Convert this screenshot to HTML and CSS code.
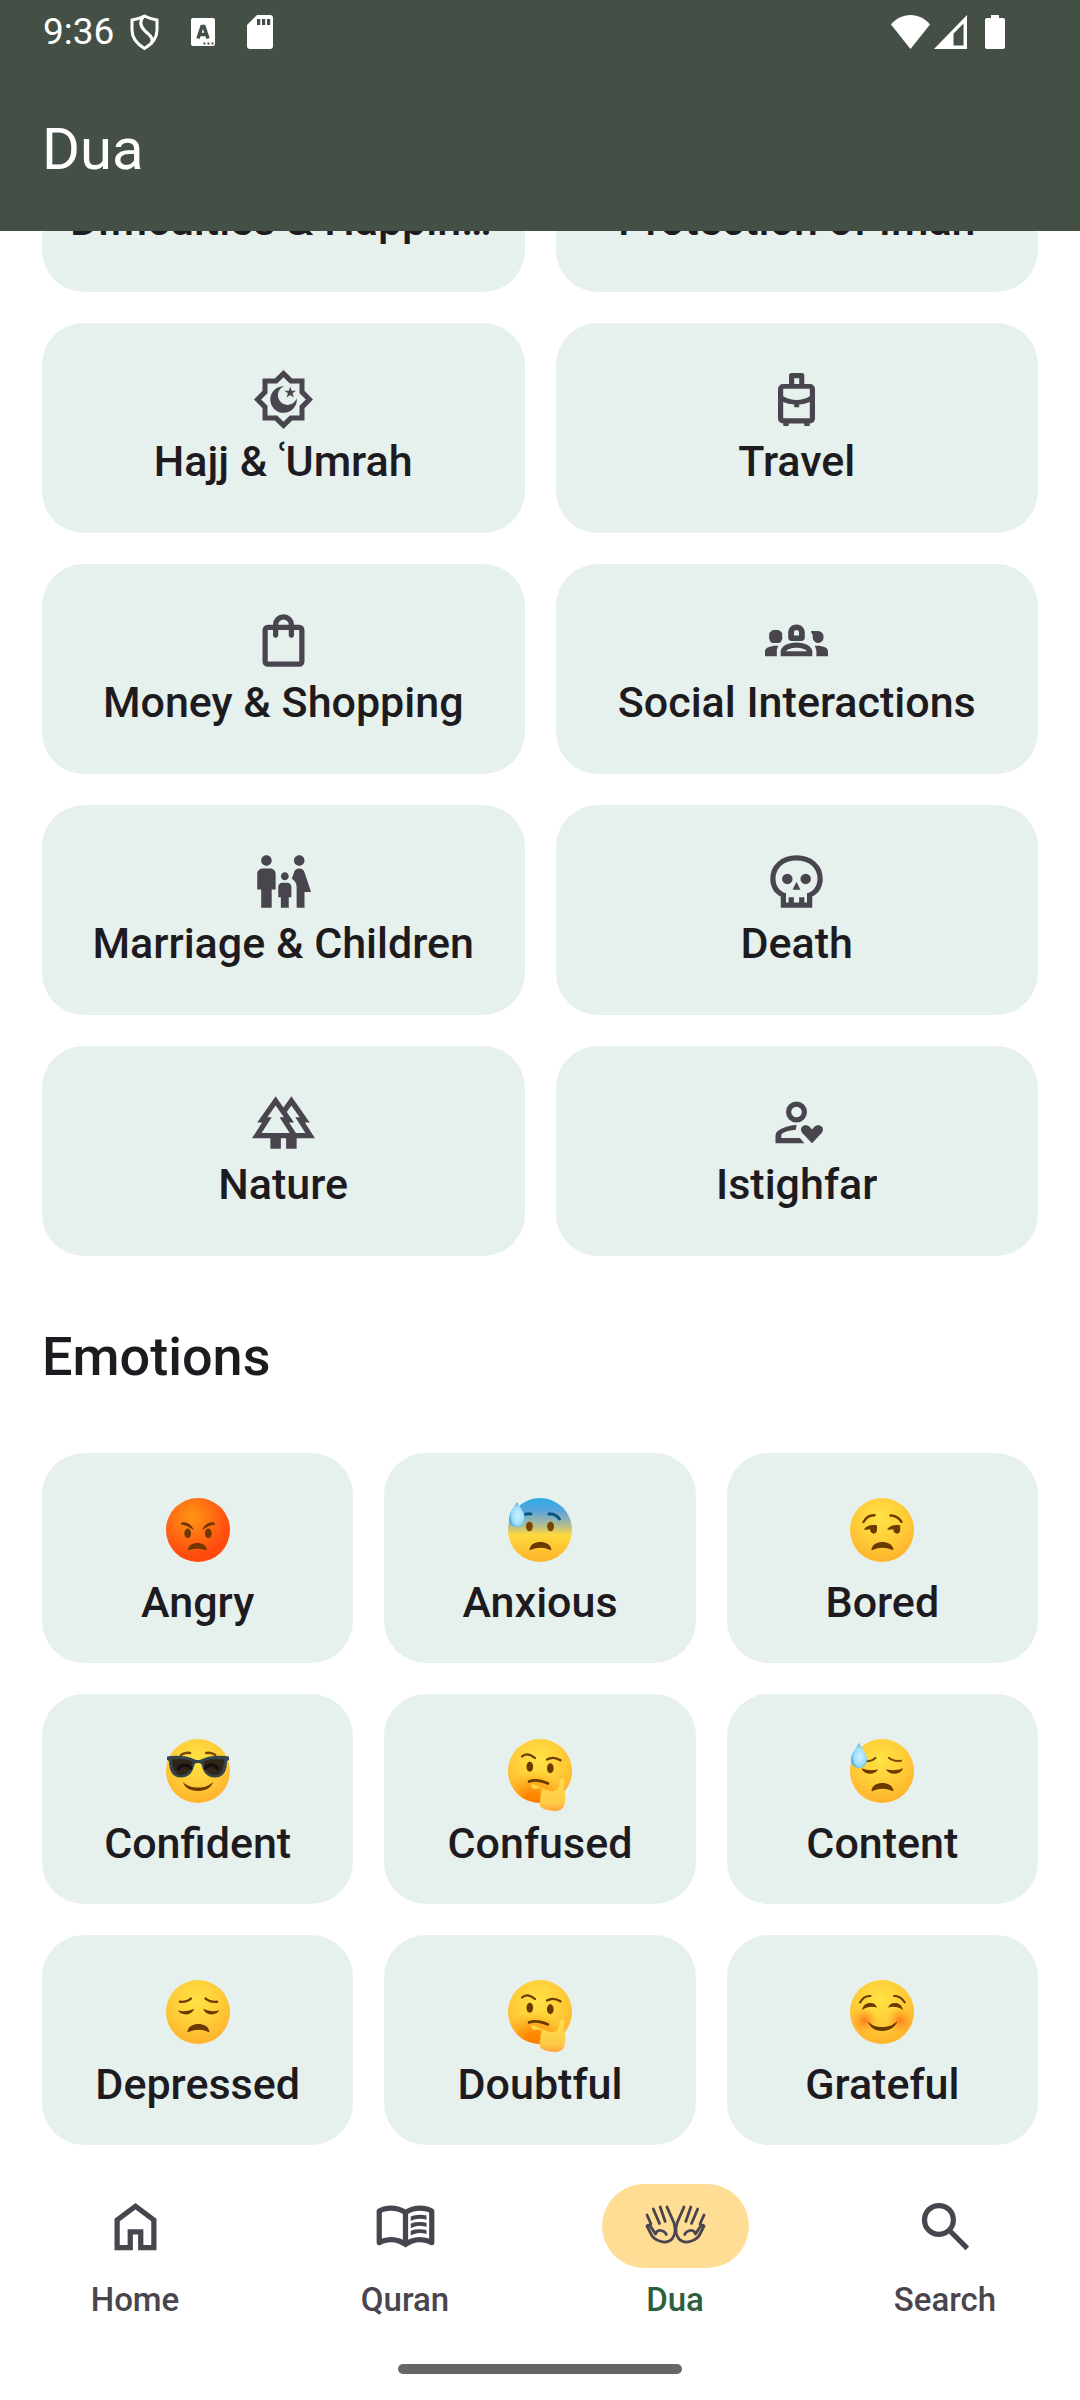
FILE: index.html
```html
<!DOCTYPE html>
<html lang="en">
<head>
<meta charset="utf-8">
<meta name="viewport" content="width=device-width, initial-scale=1">
<title>Dua</title>
<link rel="stylesheet" href="styles.css">
</head>
<body>
<svg class="defs" aria-hidden="true">
  <defs>
    <radialGradient id="yellow" cx=".47" cy=".32" r=".68"><stop offset="0" stop-color="#ffe344"/><stop offset=".55" stop-color="#ffcd38"/><stop offset="1" stop-color="#ffb22c"/></radialGradient>
    <radialGradient id="red" cx=".4" cy=".3" r=".6"><stop offset="0" stop-color="#ff9616"/><stop offset="1" stop-color="#ff4c0e"/></radialGradient>
    <linearGradient id="cold" x1="0" y1="0" x2="0" y2="1"><stop offset="0" stop-color="#2bace6"/><stop offset=".2" stop-color="#5ba3dc"/><stop offset=".42" stop-color="#aebc96"/><stop offset=".58" stop-color="#ffd83c"/><stop offset="1" stop-color="#ffb22c"/></linearGradient>
    <radialGradient id="drop" cx=".55" cy=".55" r=".6"><stop offset="0" stop-color="#c9f1ff"/><stop offset=".6" stop-color="#9fdffb"/><stop offset="1" stop-color="#2096dc"/></radialGradient>
    <radialGradient id="blush"><stop offset="0" stop-color="#ff7d1c"/><stop offset="1" stop-color="#ff9a20" stop-opacity="0"/></radialGradient>
    <radialGradient id="chin" cx=".4" cy="1" r=".5"><stop offset="0" stop-color="#ff7b00"/><stop offset=".3" stop-color="#ff8600"/><stop offset="1" stop-color="#ff9d10" stop-opacity="0"/></radialGradient>
    <linearGradient id="hand" x1="0" y1="0" x2="0" y2="1"><stop offset="0" stop-color="#ffdc4c"/><stop offset=".75" stop-color="#ffcb48"/><stop offset="1" stop-color="#ffa43a"/></linearGradient>
  </defs>
  <symbol id="tear" viewBox="0 0 64 74"><path fill="url(#drop)" d="M9 4c3 5 8 11 8 17a8 8 0 0 1-16 0C1 15 6 9 9 4z"/></symbol>
  <symbol id="frown" viewBox="0 0 64 74"><path fill="#6a3a00" d="M21.500 51C23 46 27 44 32.300 44S42 46 43.300 51c.3 1.300-.6 1.500-1.500.8C36 49 29 49 23 51.800c-.9.600-1.800.4-1.500-.8z"/></symbol>
  <symbol id="thinking" viewBox="0 0 64 74">
    <circle cx="32" cy="32" r="32" fill="url(#yellow)"/><circle cx="32" cy="32" r="32" fill="url(#chin)"/>
    <g fill="none" stroke="#6a3a00" stroke-width="2.200" stroke-linecap="round"><path d="M14 17.500c4-4 8-2.500 13 1.500M39 20.500c4-2.500 9-2 13.500.8"/><path stroke-width="2.600" d="M21 42.500c5-2 11-1.500 19 2"/></g>
    <g fill="#6a3a00"><ellipse cx="21.800" cy="27.700" rx="3.300" ry="5"/><ellipse cx="42.300" cy="29.300" rx="3.300" ry="5"/></g>
    <path fill="url(#hand)" d="M23 46.500c.5-1.800 2.500-1.500 4.500-.5C33 49 38 51 43 52c4.500 1 7-1.500 8-5.500l1-5c.5-2.500 4.500-2.500 4.500.5 0 3-.9 6-.8 9 2 3 1.800 8 1.300 12-.7 5.500-3.500 9-9 9-5 0-11-1-15.500-4-1-2-.3-4 0-5-1-1.500-.8-3 .3-4-1-2-.5-4 .5-5v-3c1-1.500 3-2 5-2.500L25 50z"/>
  </symbol>
</svg>

<header class="top">
  <div class="status">
    <span class="time">9:36</span>
    <svg class="shield" viewBox="0 0 29 36" fill="none" stroke="#fff" stroke-width="3"><path d="M14.500 2c4 2.200 8 3.300 12.500 4v10c0 8-5 14-12.500 18.500C7 30 2 24 2 16V6c4.500-.7 8.500-1.800 12.500-4z"/><path d="M14 2c-5 5-4 10 1 15 6 5 9 8 6 13"/></svg>
    <svg class="letter" viewBox="0 0 24 28"><rect width="24" height="28" rx="2" fill="#fff"/><path fill="none" stroke="#445046" stroke-width="3.500" d="M7 20.500l4-12h2l4 12M9 16.500h6"/><path fill="#445046" d="M12.500 24.500h2v2h-2zm4 0h2v2h-2zm4 0h2v2h-2z"/></svg>
    <svg class="sd" viewBox="0 0 26 34"><path fill="#fff" d="M10 0h13a3 3 0 0 1 3 3v28a3 3 0 0 1-3 3H3a3 3 0 0 1-3-3V10z"/><path fill="#445046" d="M10 4h3.200v6H10zm5 0h3.200v6H15zm5 0h3.200v6H20z"/></svg>
    <span class="signals">
      <svg class="wifi" viewBox="0 0 39 34"><path fill="#fff" d="M19.500 34L0 9.500C5 3.500 12 0 19.500 0S34 3.500 39 9.500z"/></svg>
      <svg class="cell" viewBox="0 0 33 34"><path fill="#fff" fill-rule="evenodd" d="M0 34L33 0v34zM19.500 18.500V30.500h10V8.500z"/></svg>
      <svg class="battery" viewBox="0 0 20 34"><path fill="#fff" d="M6 0h8v3h4a2 2 0 0 1 2 2v27a2 2 0 0 1-2 2H2a2 2 0 0 1-2-2V5a2 2 0 0 1 2-2h4z"/></svg>
    </span>
  </div>
  <h1 class="title">Dua</h1>
</header>

<main class="content">
  <div class="grid two scrolled">
    <button class="card"><span class="icon"></span><span class="label">Difficulties &amp; Happiness</span></button>
    <button class="card"><span class="icon"></span><span class="label">Protection of Iman</span></button>
    <button class="card">
      <svg class="icon" viewBox="0 0 63 63"><g transform="translate(31.500 31.500)"><path fill-rule="evenodd" d="M0-29.500L8.700-21H21v12.300L29.500 0 21 8.700V21H8.700L0 29.500-8.700 21H-21V8.700L-29.500 0-21-8.700V-21h12.300zM0-22.300L-6.300-16H-16v9.700L-22.300 0-16 6.300V16h9.700L0 22.300 6.300 16H16V6.300L22.300 0 16-6.300V-16H6.300z"/><path d="M.5-13.300A13.300 13.300 0 1 0 13.300-1.200 9.700 9.700 0 1 1 .5-13.300z"/><path d="M6.700-12.900l1.400 4.100h4.300L9-6.200l1.300 4.200-3.600-2.500L3.100-2l1.300-4.200L1-8.800h4.300z"/></g></svg>
      <span class="label">Hajj &amp; ʿUmrah</span></button>
    <button class="card">
      <svg class="icon" viewBox="0 0 63 63"><path fill-rule="evenodd" d="M24 16V7.500A2.500 2.500 0 0 1 26.500 5h10.300a2.500 2.500 0 0 1 2.500 2.500V16H45a5 5 0 0 1 5 5v29.500a5 5 0 0 1-5 5h-.3V58h-5.400v-2.500H23.700V58h-5.400v-2.500H18a5 5 0 0 1-5-5V21a5 5 0 0 1 5-5zM29.200 10.300V16h5v-5.700zM18.200 20.700v7.500q13.300 7.500 26.600 0v-7.500zM18.200 34v16.200h26.600V34q-5 2-10.600 2.600v2.700h-5v-2.700Q23 36 18.200 34z"/></svg>
      <span class="label">Travel</span></button>
    <button class="card">
      <svg class="icon" viewBox="0 -960 960 960"><path d="M240-80q-33 0-56.500-23.500T160-160v-480q0-33 23.500-56.500T240-720h80q0-66 47-113t113-47q66 0 113 47t47 113h80q33 0 56.500 23.500T800-640v480q0 33-23.500 56.500T720-80H240Zm0-80h480v-480h-80v80q0 17-11.500 28.500T600-520q-17 0-28.500-11.500T560-560v-80H400v80q0 17-11.500 28.500T360-520q-17 0-28.500-11.500T320-560v-80h-80v480Zm160-560h160q0-33-23.500-56.500T480-800q-33 0-56.500 23.500T400-720Z"/></svg>
      <span class="label">Money &amp; Shopping</span></button>
    <button class="card">
      <svg class="icon" viewBox="0 0 63 63"><path d="M6 22.500c1-1.500 3-1.700 4.500-1.500 2-.3 4.500 0 5.500 1.700 1.300 1 1.500 3 1 4.300.7 1.600.4 3.300-.5 4.500-.5 2-2.500 2.700-4 2.500H8c-2 0-3-1.500-3.300-3.200-1-1.200-.7-2.800-.4-4C3.700 25 4.500 23.500 6 22.500zM0 47.300v-5c0-3.600 6-6 13.300-5.500-1.200 2.500-1.500 4-1.500 6v4.500zM63 47.300v-5c0-3.600-5-6-13.300-5.500 1.200 2.500 1.700 4 1.700 6v4.500zM46 22h7a5.500 6 0 1 1-5.300 7V26c0-1.200-1.700-1.500-1.700-4z"/><path fill-rule="evenodd" d="M23.200 28.500V24c0-5 3.300-8.500 8.300-8.500s8.300 3.500 8.300 8.500v4.500c0 2.300-1.300 3.500-3.500 3.500h-9.600c-2.200 0-3.500-1.200-3.500-3.500zM29 26.500h5V23c0-2.800-5-2.800-5 0zM15.700 47.300v-4.500c0-5.500 7-9.300 15.800-9.300s15.800 3.800 15.800 9.300v4.500zM21 42.200h21c-1.500-2-6-3.500-10.500-3.500S22.500 40.200 21 42.200z"/></svg>
      <span class="label">Social Interactions</span></button>
    <button class="card">
      <svg class="icon" viewBox="0 0 24 24"><path d="M16 4c0-1.110.89-2 2-2s2 .89 2 2-.89 2-2 2-2-.89-2-2zm4 18v-6h2.500l-2.540-7.630A2.010 2.010 0 0 0 18.060 7h-.12a2 2 0 0 0-1.900 1.370l-.86 2.580c1.080.6 1.820 1.730 1.820 3.050v8h3zm-7.500-10.500c.83 0 1.500-.67 1.500-1.500s-.67-1.500-1.500-1.500S11 9.170 11 10s.67 1.500 1.500 1.500zM5.500 6c1.110 0 2-.89 2-2s-.89-2-2-2-2 .89-2 2 .89 2 2 2zm2 16v-7H9V9c0-1.100-.9-2-2-2H4c-1.100 0-2 .9-2 2v6h1.500v7h4zm6.500 0v-4h1v-4c0-.82-.68-1.500-1.500-1.500h-2c-.82 0-1.500.68-1.500 1.500v4h1v4h3z"/></svg>
      <span class="label">Marriage &amp; Children</span></button>
    <button class="card">
      <svg class="icon" viewBox="0 -960 960 960"><path fill-rule="evenodd" d="M240-80v-170q-39-17-68.500-45.500t-50-64.500q-20.500-36-31-77T80-520q0-158 112-259t288-101q176 0 288 101t112 259q0 42-10.500 83t-31 77q-20.500 36-50 64.500T720-250v170H240Zm80-80h40v-80h80v80h80v-80h80v80h40v-142q38-9 67.500-30t50-50q20.500-29 31.500-64t11-74q0-125-88.500-202.500T480-800q-143 0-231.500 77.500T160-520q0 39 11 74t31.500 64q20.500 29 50.500 50t67 30v142Z"/><path d="M420-355h120l-60-122Z"/><circle cx="313" cy="-520" r="0"/><circle cx="313" cy="-520" r="0"/><circle cx="340" cy="-520" r="80"/><circle cx="620" cy="-520" r="80"/></svg>
      <span class="label">Death</span></button>
    <button class="card">
      <svg class="icon" viewBox="0 -960 960 960"><path d="M280-80v-160H0l154-240H80l280-400 120 172 120-172 280 400h-74l154 240H680v160H520v-160h-80v160H280Zm389-240h145L659-560h67L600-740l-71 101 111 159h-74l103 160Zm-523 0h428L419-560h67L360-740 234-560h67L146-320Z"/></svg>
      <span class="label">Nature</span></button>
    <button class="card">
      <svg class="icon" viewBox="0 0 63 63"><path fill-rule="evenodd" d="M31.500 10.500a10.500 10.500 0 1 1 0 21 10.500 10.500 0 0 1 0-21zm0 5.200a5.300 5.300 0 1 0 0 10.600 5.300 5.300 0 0 0 0-10.600z"/><path d="M10.500 52.300V45c0-4 3-6 7-7.800 4-1.600 9-3 14.200-3.100l-1.100 5c-4.500.1-8.500 1-12 2.700-1.600.8-2.300 1.500-2.300 2.800V47H35l4.300 5.300zM47 52.200L37.300 42c-1.800-2.200-1.600-4.800 0-6.400 2-2 5.500-1.900 7.300.2l2.400 2.700 2.400-2.700c1.800-2.100 5.300-2.200 7.300-.2 1.600 1.600 1.800 4.200 0 6.400z"/></svg>
      <span class="label">Istighfar</span></button>
  </div>

  <h2 class="section">Emotions</h2>

  <div class="grid three">
    <button class="card">
      <svg class="emoji" viewBox="0 0 64 74"><circle cx="32" cy="32" r="32" fill="url(#red)"/><g fill="#703800"><path d="M15 26.500c-.6-1 .5-2.200 2-2.300 5-.5 9 3.500 11 8-4-2.700-8-5.200-13-5.700zM49 26.500c.6-1-.5-2.200-2-2.300-5-.5-9 3.500-11 8 4-2.700 8-5.200 13-5.700z"/><ellipse cx="21.700" cy="35.300" rx="3.400" ry="4.800"/><ellipse cx="42.300" cy="35.300" rx="3.400" ry="4.800"/><path d="M22 51c1-4 5-6 9.500-6s8 2 9.300 6c.2 1.200-.7 1.600-1.600 1-5-1.800-10.500-1.800-15.600 0-.9.600-1.800.2-1.600-1z"/></g></svg>
      <span class="label">Angry</span></button>
    <button class="card">
      <svg class="emoji" viewBox="0 0 64 74"><circle cx="32" cy="32" r="32" fill="url(#cold)"/><path fill="none" stroke="#07567f" stroke-width="3" stroke-linecap="round" d="M16 17c2-1.500 5-1.500 7-1M41 16c4-.5 8 1.500 10.500 5"/><g fill="#7a4500"><ellipse cx="21.400" cy="28.500" rx="3.400" ry="4.800"/><ellipse cx="42.600" cy="28.500" rx="3.400" ry="4.800"/></g><use href="#frown"/><use href="#tear"/></svg>
      <span class="label">Anxious</span></button>
    <button class="card">
      <svg class="emoji" viewBox="0 0 64 74"><circle cx="32" cy="32" r="32" fill="url(#yellow)"/><path fill="none" stroke="#6a3a00" stroke-width="2.400" stroke-linecap="round" d="M13.500 24c2.500-4.500 6-7 11-6.700M40.500 17.500c5 0 8.500 2.500 11 6.300"/><path fill="#6a3a00" d="M13.800 31.500c3-4 8-5.200 13.200-4v4c0 3-2 5-4.500 3.800-1.800-1-2.600-2.300-2.300-4.200-2 .8-4 .8-6.400.4zM37 31.500c3-4 8-5.200 13.200-4v4c0 3-2 5-4.500 3.800-1.800-1-2.600-2.300-2.300-4.200-2 .8-4 .8-6.400.4z"/><use href="#frown"/></svg>
      <span class="label">Bored</span></button>
    <button class="card">
      <svg class="emoji" viewBox="0 0 64 74"><circle cx="32" cy="32" r="32" fill="url(#yellow)"/><path fill="none" stroke="#7a4a00" stroke-width="2.600" stroke-linecap="round" d="M15 16c2.500-2 5.500-2.600 9-2M40.300 14c3.500-.6 6.500 0 9 2"/><path fill="#35454c" d="M1 17.500c9-1.400 20-.8 28 3 2 .8 4 .8 6 0 8-3.800 19-4.400 28-3v3.500l-2 1c0 9-3 16.500-12 16.500-8.500 0-12-6-13.500-13-.7-2-6.300-2-7 0C27 32.500 23.500 38.500 15 38.500 6 38.500 3 31 3 22l-2-1z"/><path fill="#302519" d="M6 20.500c6-1 14-1 20.500 2C26 30 22 36 15.500 36 8.500 36 6 29 6 20.500zM58 20.500c-6-1-14-1-20.500 2C38 30 42 36 48.500 36 55.500 36 58 29 58 20.500z"/><path fill="none" stroke="#15110e" stroke-width="3.500" stroke-linecap="round" d="M12.500 29.500c3-4.500 9-4.500 12-.5M39.500 29c3-4 9-4 12 .5"/><path fill="#6a3a00" d="M17 43c4 4 9 5.600 15 5.600S43 47 47 43c-1 5-7 9-15 9s-14-4-15-9z"/></svg>
      <span class="label">Confident</span></button>
    <button class="card">
      <svg class="emoji"><use href="#thinking"/></svg>
      <span class="label">Confused</span></button>
    <button class="card">
      <svg class="emoji" viewBox="0 0 64 74"><circle cx="32" cy="32" r="32" fill="url(#yellow)"/><path fill="none" stroke="#7a4a00" stroke-width="2" stroke-linecap="round" d="M17 22.300c4 0 6.500-1.500 8.500-3.500M38.800 18.800c3 2.500 7 3.600 12.200 3"/><path fill="#6a3a00" d="M11.700 29.300c5 2.200 11 2.600 16.300.9-1.500 3-4.500 4.600-8.500 4.500s-7-2.300-7.800-5.400zM53 29.300c-5 2.200-11 2.600-17 .9 1.500 3 4.800 4.600 8.800 4.500s7.400-2.300 8.200-5.400z"/><use href="#frown"/><use href="#tear"/></svg>
      <span class="label">Content</span></button>
    <button class="card">
      <svg class="emoji" viewBox="0 0 64 74"><circle cx="32" cy="32" r="32" fill="url(#yellow)"/><path fill="none" stroke="#6a3a00" stroke-width="2.400" stroke-linecap="round" d="M14 21.800c5 .3 8.500-.8 11-3.300M39.500 18.500c2.500 2.500 6 3.600 11.500 3.300"/><path fill="#6a3a00" d="M12 30.300c5 1.500 11 1 16-1.500-1 3.500-4 5.600-8 5.600s-7-1.600-8-4.100zM53.300 30.300c-5 1.500-11 1-16-1.500 1 3.500 4 5.600 8 5.600s7-1.600 8-4.100z"/><use href="#frown"/></svg>
      <span class="label">Depressed</span></button>
    <button class="card">
      <svg class="emoji"><use href="#thinking"/></svg>
      <span class="label">Doubtful</span></button>
    <button class="card">
      <svg class="emoji" viewBox="0 0 64 74"><circle cx="32" cy="32" r="32" fill="url(#yellow)"/><circle cx="14.300" cy="40.500" r="13" fill="url(#blush)"/><circle cx="50" cy="40.500" r="13" fill="url(#blush)"/><path fill="none" stroke="#6a3a00" stroke-width="2" stroke-linecap="round" d="M10 22.500c2.500-4.500 6-7 10.500-6.500M44 16c4.500-.5 8 2 10.800 6.500"/><path fill="#6a3a00" d="M12 30c1-4.500 4-7 8-7s6 2 7 4.500c-4-1.300-10-1.300-15 2.500zM53 30c-1-4.500-4-7-8-7s-6 2-7 4.500c4-1.300 10-1.300 15 2.500zM17.500 41c4 4.500 9 6 14.500 6s11-1.500 15.500-6c-2 6-8 10-15.500 10s-12.500-4-14.500-10z"/></svg>
      <span class="label">Grateful</span></button>
  </div>
</main>

<footer class="bottom">
  <nav class="nav">
    <a class="tab" href="#home"><span class="pill"><svg class="icon" viewBox="0 -960 960 960"><path d="M240-200h120v-240h240v240h120v-360L480-740 240-560v360Zm-80 80v-480l320-240 320 240v480H520v-240h-80v240H160Z"/></svg></span>Home</a>
    <a class="tab" href="#quran"><span class="pill"><svg class="icon" viewBox="0 -960 960 960"><path d="M560-564v-68q33-14 67.500-21t72.500-7q26 0 51 4t49 10v64q-24-9-48.500-13.500T700-600q-38 0-73 9.500T560-564Zm0 220v-68q33-14 67.500-21t72.500-7q26 0 51 4t49 10v64q-24-9-48.500-13.500T700-380q-38 0-73 9t-67 27Zm0-110v-68q33-14 67.500-21t72.500-7q26 0 51 4t49 10v64q-24-9-48.500-13.500T700-490q-38 0-73 9.500T560-454ZM260-320q47 0 91.500 10.500T440-278v-394q-41-24-87-36t-93-12q-36 0-71.500 7T120-692v396q35-12 69.500-18t70.500-6Zm260 42q44-21 88.500-31.500T700-320q36 0 70.500 6t69.500 18v-396q-33-14-68.500-21t-71.500-7q-47 0-93 12t-87 36v394Zm-40 118q-48-38-104-59t-116-21q-42 0-82.500 11T100-198q-21 11-40.500-1T40-234v-482q0-11 5.500-21T62-752q46-24 96-36t102-12q58 0 113.500 15T480-740q51-30 106.500-45T700-800q52 0 102 12t96 36q11 5 16.500 15t5.500 21v482q0 23-19.500 35t-40.500 1q-37-20-77.500-31T700-240q-60 0-116 21t-104 59Z"/></svg></span>Quran</a>
    <a class="tab active" href="#dua" aria-current="page"><span class="pill"><svg class="icon" viewBox="0 0 63 63"><g id="palm" fill="none" stroke="#49454f" stroke-width="2.800" stroke-linecap="round" stroke-linejoin="round"><path d="M3 20l4 9M9.300 14l6.200 14.500M16.200 12l5 14.500M23 12l7 16c1.500 5 1.500 12-2 16-3 3-7 3.600-11 2.500C11 45 8 42 6.500 38L3 31c1.500-1.500 3-1 4 1l4.500 7c1-3 3.500-4.500 6.500-3.200 2 .8 4 1.700 4.300 3.700"/></g><use href="#palm" transform="matrix(-1 0 0 1 63 0)"/></svg></span>Dua</a>
    <a class="tab" href="#search"><span class="pill"><svg class="icon" viewBox="0 -960 960 960"><path d="M784-120 532-372q-30 24-69 38t-83 14q-109 0-184.500-75.500T120-580q0-109 75.500-184.500T380-840q109 0 184.500 75.500T640-580q0 44-14 83t-38 69l252 252-56 56ZM380-400q75 0 127.500-52.500T560-580q0-75-52.500-127.500T380-760q-75 0-127.500 52.500T200-580q0 75 52.500 127.500T380-400Z"/></svg></span>Search</a>
  </nav>
  <div class="gesture"></div>
</footer>
</body>
</html>
```
FILE: styles.css
```css
* {
  box-sizing: border-box;
}

body {
  margin: 0;
  min-height: 100vh;
  display: flex;
  flex-direction: column;
  background: #fff;
  color: #1d1b20;
  font-family: Roboto, "Noto Sans", sans-serif;
}

svg {
  display: block;
  flex: none;
}

.defs {
  position: absolute;
  width: 0;
  height: 0;
}

/* Status bar and title */
.top {
  background: #445046;
  color: #fff;
}

.status {
  display: flex;
  align-items: center;
  height: 63px;
  padding: 0 75px 0 43px;
  font-size: 37px;
}

.time {
  margin-right: 16px;
}

.shield {
  width: 29px;
  height: 36px;
}

.letter {
  width: 24px;
  height: 28px;
  margin: 0 32px;
}

.sd {
  width: 26px;
  height: 34px;
}

.signals {
  display: flex;
  margin-left: auto;
}

.wifi {
  width: 39px;
  height: 34px;
  margin-right: 4px;
}

.cell {
  width: 33px;
  height: 34px;
  margin-right: 18px;
}

.battery {
  width: 20px;
  height: 34px;
}

.title {
  margin: 0;
  padding: 4px 42px 0;
  line-height: 164px;
  font-size: 58px;
  font-weight: 400;
}

/* Category cards */
.content {
  flex: 1;
  overflow: hidden;
  padding: 0 42px;
}

.grid {
  display: grid;
  gap: 31px;
}

.two {
  grid-template-columns: repeat(2, minmax(0, 1fr));
}

.three {
  grid-template-columns: repeat(3, minmax(0, 1fr));
}

/* The list is part-way scrolled under the title bar */
.scrolled {
  margin-top: -149px;
}

.card {
  display: flex;
  flex-direction: column;
  align-items: center;
  justify-content: flex-start;
  height: 210px;
  padding: 45px 28px 0;
  border: 0;
  border-radius: 42px;
  background: #e6f0ec;
  color: inherit;
  font: inherit;
}

.label {
  max-width: 100%;
  overflow: hidden;
  text-overflow: ellipsis;
  white-space: nowrap;
  font-size: 43px;
  line-height: 60px;
  font-weight: 500;
}

.icon {
  flex: none;
  width: 63px;
  height: 63px;
  fill: #49454f;
}

.emoji {
  width: 64px;
  height: 74px;
}

.section {
  margin: 0;
  padding: 68px 0 63px;
  font-size: 54px;
  line-height: 66px;
  font-weight: 500;
}

/* Bottom navigation */
.bottom {
  padding: 39px 0 26px;
  background: #fff;
}

.nav {
  display: grid;
  grid-template-columns: repeat(4, 1fr);
}

.tab {
  display: flex;
  flex-direction: column;
  align-items: center;
  gap: 12px;
  color: #49454f;
  font-size: 33px;
  line-height: 40px;
  font-weight: 500;
  text-decoration: none;
}

.pill {
  display: flex;
  align-items: center;
  justify-content: center;
  width: 147px;
  height: 84px;
  border-radius: 42px;
}

.active {
  color: #2c5f3c;
}

.active .pill {
  background: #ffdd94;
}

.gesture {
  width: 284px;
  height: 10px;
  margin: 44px auto 0;
  border-radius: 5px;
  background: #666;
}
```
